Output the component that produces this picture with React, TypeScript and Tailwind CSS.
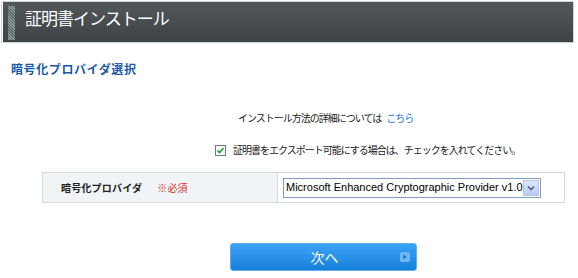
import React from 'react';

const jp = "font-['Noto_Sans_CJK_JP','Liberation_Sans',sans-serif]";

const App: React.FC = () => {
  return (
    <div className={`w-[578px] h-[278px] bg-white overflow-hidden ${jp}`}>
      {/* header */}
      <div className="ml-[1px] mt-[1px] w-[573px] h-[42px] border border-[#ccd5da] rounded-[1px]">
        <div className="flex h-full ml-[1px] bg-gradient-to-b from-[#525759] to-[#3e4345]">
          <div className="ml-[5px] mt-[4px] w-[7px] h-[34px] bg-[repeating-linear-gradient(45deg,#8d989d_0px,#8d989d_1px,#5d676b_1px,#5d676b_2px)]" />
          <h1 className="ml-[10px] mt-[5px] text-[17px] leading-[22px] text-white tracking-[-1px]">
            証明書インストール
          </h1>
        </div>
      </div>

      {/* section title */}
      <h2 className="mt-[19px] pl-[11px] text-[12px] leading-[14px] font-bold text-[#1b5aa6] tracking-[0.6px]">
        暗号化プロバイダ選択
      </h2>

      {/* guide text */}
      <p className="mt-[35px] pl-[238px] text-[10px] leading-[14px] text-[#222] tracking-[-1px]">
        インストール方法の詳細については<span className="ml-[5px] text-[#2277dd]">こちら</span>
      </p>

      <div className="mt-[18px] pl-[215px] flex items-center gap-[7px] text-[10px] leading-[14px] text-[#222] tracking-[-1px]">
        <span className="w-[11px] h-[11px] border border-[#6a7b8c] bg-white flex items-center justify-center">
          <svg width="9" height="9" viewBox="0 0 9 9">
            <path d="M1.5 4.5 L3.5 6.5 L7.5 2" fill="none" stroke="#1e9c2a" strokeWidth="1.6" />
          </svg>
        </span>
        <span>証明書をエクスポート可能にする場合は、チェックを入れてください。</span>
      </div>

      {/* form table */}
      <div className="mt-[15px] ml-[42px] w-[523px] h-[31px] flex border border-[#d3d9dd]">
        <div className="w-[235px] bg-[#f1f4f6] border-r border-[#d3d9dd] flex items-center pl-[18px] text-[10px] tracking-[0.2px]">
          <span className="font-bold text-[#222]">暗号化プロバイダ</span>
          <span className="ml-[15px] text-[#e02a2a]">※必須</span>
        </div>
        <div className="flex items-center pl-[5px]">
          <div className="w-[258px] h-[20px] border border-[#7f9db9] bg-white flex items-center">
            <span className="flex-1 pl-[2px] font-['Liberation_Sans',sans-serif] text-[11px] text-black whitespace-nowrap overflow-hidden">
              Microsoft Enhanced Cryptographic Provider v1.0
            </span>
            <span className="w-[16px] h-[16px] mr-[1px] bg-gradient-to-b from-[#dfe7fb] to-[#b9cbf3] border border-[#b3c5ee] flex items-center justify-center">
              <svg width="8" height="6" viewBox="0 0 8 6">
                <path d="M1 1.5 L4 4.5 L7 1.5" fill="none" stroke="#4d6185" strokeWidth="1.6" />
              </svg>
            </span>
          </div>
        </div>
      </div>

      {/* next button */}
      <div className="mt-[40px] ml-[230px] w-[187px] h-[28px] rounded-[3px] border border-[#5fb0f0] bg-gradient-to-b from-[#3ba3f6] to-[#1580d8] flex items-center relative">
        <span className="flex-1 text-center text-white text-[14px] leading-[20px] pl-[2px]">次へ</span>
        <span className="absolute right-[6px] top-[8px] w-[10px] h-[10px] rounded-[2px] bg-[#6cb8f2] flex items-center justify-center">
          <svg width="4" height="6" viewBox="0 0 4 6">
            <path d="M0.5 0.5 L3.5 3 L0.5 5.5 Z" fill="#1a6fc0" />
          </svg>
        </span>
      </div>
    </div>
  );
};

export default App;
